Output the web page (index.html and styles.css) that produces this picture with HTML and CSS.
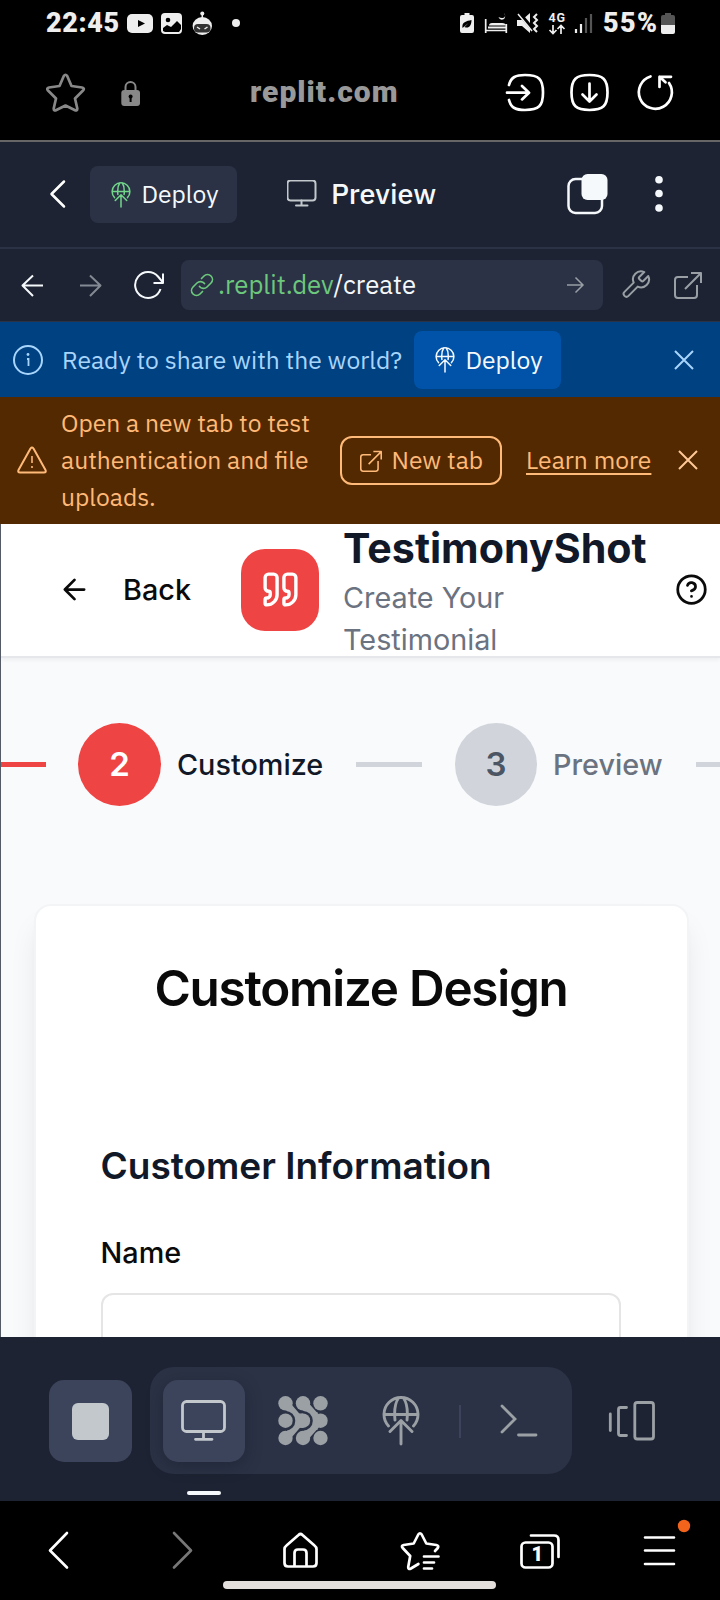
FILE: index.html
```html
<!DOCTYPE html>
<html lang="en">
<head>
<meta charset="utf-8">
<title>TestimonyShot – Preview</title>
<link rel="stylesheet" href="styles.css">
</head>
<body>
<svg class="defs" width="0" height="0">
  <symbol id="globe" viewBox="0 0 38 50">
    <g fill="none" stroke="currentColor" stroke-width="2.900" stroke-linecap="round" stroke-linejoin="round">
      <path d="M6.500 30A17 17 0 1 1 31.500 30M2.500 18.500h33M16.500 2C13 7 12 14 13 24M21.500 2c3.500 5 4.500 12 3.500 22M19 25v23M8 35.500l11-11 11 11"/>
    </g>
  </symbol>
  <symbol id="external" viewBox="0 0 28 28">
    <path fill="none" stroke="currentColor" stroke-width="2" stroke-linejoin="round" d="M14 6H4a3 3 0 0 0-3 3v15a3 3 0 0 0 3 3h16a3 3 0 0 0 3-3V14M17 2h10v10M27 2 11 18"/>
  </symbol>
</svg>

<main class="phone">
  <header class="status">
    <span class="clock">22:45</span>
    <svg class="notes" width="114" height="46" viewBox="127 0 114 46">
      <rect x="127" y="14" width="26" height="19" rx="5" fill="#eee"/><path d="M138 20v7l7-3.500z" fill="#000"/>
      <rect x="161" y="13" width="21" height="21" rx="4" fill="#eee"/><circle cx="168" cy="20" r="2.300" fill="#000"/><path d="M163 31v-3l4-3 4 2 6-6 4 4v4l-2 3h-14z" fill="#000"/>
      <circle cx="202.300" cy="13.500" r="2" fill="#eee"/><path d="M202.300 13v6" stroke="#eee" stroke-width="1.500"/><ellipse cx="202.300" cy="26" rx="9.700" ry="9" fill="#eee"/><rect x="194" y="24" width="16.500" height="8.500" rx="4" fill="#333"/><path d="m197 27 3 2M207.500 27l-3 2" stroke="#eee" stroke-width="1.500"/>
      <circle cx="236" cy="23" r="4" fill="#eee"/>
    </svg>
    <svg class="signals" width="134" height="46" viewBox="460 0 134 46">
      <path d="M464.500 15v-2h5v2H472a2 2 0 0 1 2 2v14a2 2 0 0 1-2 2h-10a2 2 0 0 1-2-2V17a2 2 0 0 1 2-2z" fill="#eee"/><path d="M462.500 28c-1-6 4-7 9-8 0 6-3 9-7 7l4-4" fill="#000"/>
      <path d="M485.700 19v14M485 30.500h22M506.300 33v-9" fill="none" stroke="#eee" stroke-width="1.700"/><path d="M488 28.500v-2h18v2zM489 25.500q0-2.500 3-2.500h10q4 0 4 2.500z" fill="#eee"/><path d="M504 13c3.500 4-1.500 6.500-5.500 4 2 5.500 9.500 2 5.500-4z" fill="#eee"/>
      <path d="M517 20h5l8-7v20l-8-7h-5z" fill="#eee"/><path d="m519 13 15 18" stroke="#000" stroke-width="4"/><path d="m518 14 14 17" stroke="#eee" stroke-width="1.500"/><path d="M537 14l-3 3 3 3-3 3 3 3-3 3 3 3" fill="none" stroke="#eee" stroke-width="2"/>
      <text x="548.500" y="22" class="net" textLength="17">4G</text><path d="M553 25v8m-3.500-3 3.500 3.500 3.500-3.500M561 34v-8.500m-3.500 3.500 3.500-3.500 3.500 3.500" fill="none" stroke="#eee" stroke-width="1.700"/>
      <path d="M576 29v4M581 24v9" stroke="#eee" stroke-width="2.200"/><path d="M586 18v15M591 14v19" stroke="#555" stroke-width="2.200"/>
    </svg>
    <span class="percent">55%</span>
    <svg width="15" height="46" viewBox="661 0 15 46"><path d="M665 15v-2h6v2h2q2 0 2 2v8h-14v-8q0-2 2-2z" fill="#555"/><path d="M661 25h14v7q0 2-2 2h-10q-2 0-2-2z" fill="#eee"/></svg>
  </header>

  <section class="browser">
    <svg class="b-star" width="40" height="40" viewBox="46 73 40 40"><path d="M63.800 76q1.700-2.500 3.400 0L71.500 86 82 87.500q3 .8 1 3L75 98.500l2.300 10q0 3-2.700 1.500L65.500 105.500l-9.100 4.500q-2.700 1.500-2.700-1.500l2.300-10-8-8q-2-2.200 1-3L59.500 86z" fill="none" stroke="#888" stroke-width="2.700" stroke-linejoin="round"/></svg>
    <svg class="b-lock" width="20" height="27" viewBox="121 79 20 27"><path d="M125.500 90v-4a5 5 0 0 1 10 0v4" fill="none" stroke="#888" stroke-width="2"/><rect x="121.300" y="89" width="18.700" height="16" rx="3" fill="#888"/><path d="M130.600 96v5" stroke="#000" stroke-width="2"/><circle cx="130.600" cy="95.500" r="2" fill="#000"/></svg>
    <span class="domain">replit.com</span>
    <svg class="b-acts" width="170" height="42" viewBox="505 72 170 42">
      <g fill="none" stroke="#fff" stroke-width="2.700" stroke-linecap="round" stroke-linejoin="round">
        <path d="M509 85c2-8 7-10 16-10 14 0 18 4 18 17.500S539 110 525 110c-9 0-14-2-16-10M507 92.700h21M522 86l7 6.700-7 6.700"/>
        <path d="M589.500 75c13.500 0 18 4 18 17.500s-4.500 17.500-18 17.500-18-4-18-17.500 4.500-17.500 18-17.500zM589.500 83.500V101M582.500 94.500l7 7 7-7"/>
        <path d="M650.500 76.500A16.500 16.500 0 1 0 669 83M659.500 87V76.800h11.500M659.500 76.800l6 5.500"/>
      </g>
    </svg>
  </section>

  <section class="topbar">
    <svg class="t-back" width="18" height="30" viewBox="49 179.500 18 30"><path d="M64 182 51.500 194.500 64 207" fill="none" stroke="#fff" stroke-width="2.500" stroke-linecap="round" stroke-linejoin="round"/></svg>
    <div class="deploy"><svg class="globe green" width="20" height="26"><use href="#globe"/></svg><span class="w-deploy">Deploy</span></div>
    <svg class="t-screen" width="30" height="28" viewBox="287 181.500 30 28"><g fill="none" stroke="#c2c8cc" stroke-width="2" stroke-linecap="round"><rect x="287.500" y="182" width="28" height="20" rx="3"/><path d="M301.500 202v5M296 207h11.500"/></g></svg>
    <span class="t-title">Preview</span>
    <svg class="t-tabs" width="42" height="42" viewBox="567 174 42 42"><rect x="568.500" y="179" width="33.500" height="34" rx="7" fill="none" stroke="#f5f9fc" stroke-width="2.500"/><rect x="581.500" y="174" width="26" height="26" rx="6" fill="#f5f9fc"/></svg>
    <svg class="t-more" width="8" height="36" viewBox="655.500 177 8 36" fill="#f5f9fc"><circle cx="659.500" cy="180.800" r="3.800"/><circle cx="659.500" cy="194.500" r="3.800"/><circle cx="659.500" cy="209" r="3.800"/></svg>
  </section>

  <section class="address">
    <svg class="a-nav" width="144" height="30" viewBox="21 270 144 30"><g fill="none" stroke-width="2" stroke-linejoin="round">
      <path d="M43 285.500H22.500M33 275.500l-10.500 10L33 296" stroke="#f5f9fc"/>
      <path d="M80 285.500h20.500M90 275.500l10.500 10L90 296" stroke="#848a93"/>
      <path d="M160.500 289A13 13 0 1 1 158 276.500l5 6M163 273.500V283h-9.500" stroke="#f5f9fc"/></g></svg>
    <div class="url">
      <svg width="24" height="24" viewBox="0 0 24 24"><g fill="none" stroke="#6cc87c" stroke-width="1.700" stroke-linecap="round"><path d="M9.500 13.500a5 5 0 0 0 7.500.5l4-4a4.800 4.800 0 0 0-7-7l-2.500 2.500"/><path d="M14.500 10.500a5 5 0 0 0-7.500-.5l-4 4a4.800 4.800 0 0 0 7 7l2.500-2.500"/></g></svg>
      <span class="w-url"><span class="host">.replit.dev</span>/create</span>
      <svg width="18" height="18" viewBox="0 0 18 18"><path d="M0 9h16M8.500 1.500 16 9l-7.500 7.500" fill="none" stroke="#999fa5" stroke-width="1.500"/></svg>
    </div>
    <svg class="a-wrench" width="30" height="30" viewBox="1 1 22.500 22.500"><path d="M14.700 6.300a1 1 0 0 0 0 1.400l1.600 1.600a1 1 0 0 0 1.400 0l3.770-3.770a6 6 0 0 1-7.940 7.940l-6.910 6.910a2.120 2.120 0 0 1-3-3l6.910-6.910a6 6 0 0 1 7.940-7.940z" fill="none" stroke="#999fa5" stroke-width="1.500" stroke-linejoin="round"/></svg>
    <svg class="a-ext" width="28" height="28"><use href="#external"/></svg>
  </section>

  <section class="banner blue">
    <svg class="i-info" width="30" height="30" viewBox="0 0 30 30"><circle cx="15" cy="15" r="14" fill="none" stroke="#a8d5fc" stroke-width="2"/><path d="M14 14h1.500v7" fill="none" stroke="#a8d5fc" stroke-width="1.800"/><circle cx="15" cy="9.500" r="1.400" fill="#a8d5fc"/></svg>
    <span class="w-ready">Ready to share with the world?</span>
    <div class="deploy bright"><svg class="globe" width="20" height="26"><use href="#globe"/></svg><span class="w-deploy">Deploy</span></div>
    <svg class="x-blue" width="20" height="20" viewBox="0 0 20 20"><path d="m1 1 18 18M19 1 1 19" stroke="#a8d5fc" stroke-width="2"/></svg>
  </section>

  <section class="banner brown">
    <svg class="i-warn" width="30" height="28" viewBox="0 0 30 28"><path d="M13.500 2.500q1.500-2 3 0L28.500 24q1 2.500-1.500 2.500H3Q.5 26.500 1.500 24z" fill="none" stroke="#ffb978" stroke-width="2" stroke-linejoin="round"/><path d="M15 10v7" stroke="#ffb978" stroke-width="1.600"/><circle cx="15" cy="21" r="1.100" fill="#ffb978"/></svg>
    <p class="warn">Open a new tab to test<br>authentication and file<br>uploads.</p>
    <div class="newtab"><svg width="22" height="22"><use href="#external"/></svg><span class="w-newtab">New tab</span></div>
    <span class="learn">Learn more</span>
    <svg class="x-brown" width="20" height="20" viewBox="0 0 20 20"><path d="m1 1 18 18M19 1 1 19" stroke="#ffc896" stroke-width="2"/></svg>
  </section>

  <section class="app">
    <header class="app-head">
      <svg class="h-arrow" width="33" height="33" viewBox="0 0 24 24"><path d="m12 19-7-7 7-7M19 12H5" fill="none" stroke="#0a0a0a" stroke-width="2" stroke-linecap="round" stroke-linejoin="round"/></svg>
      <span class="h-back">Back</span>
      <div class="logo"><svg width="41" height="41" viewBox="0 0 24 24"><g fill="none" stroke="#fff" stroke-width="2" stroke-linecap="round" stroke-linejoin="round"><path d="M16 3a2 2 0 0 0-2 2v6a2 2 0 0 0 2 2 1 1 0 0 1 1 1v1a2 2 0 0 1-2 2 1 1 0 0 0-1 1v2a1 1 0 0 0 1 1 6 6 0 0 0 6-6V5a2 2 0 0 0-2-2z"/><path d="M5 3a2 2 0 0 0-2 2v6a2 2 0 0 0 2 2 1 1 0 0 1 1 1v1a2 2 0 0 1-2 2 1 1 0 0 0-1 1v2a1 1 0 0 0 1 1 6 6 0 0 0 6-6V5a2 2 0 0 0-2-2z"/></g></svg></div>
      <div class="brand"><h1>TestimonyShot</h1><p>Create Your<br>Testimonial</p></div>
      <svg class="h-help" width="33" height="33" viewBox="0 0 24 24"><g fill="none" stroke="#0a0a0a" stroke-width="2" stroke-linecap="round"><circle cx="12" cy="12" r="10"/><path d="M9.090 9a3 3 0 0 1 5.830 1c0 2-3 3-3 3M12 17h.01"/></g></svg>
    </header>
    <nav class="steps">
      <span class="line first"></span>
      <span class="num on">2</span><span class="label on">Customize</span>
      <span class="line mid"></span>
      <span class="num">3</span><span class="label">Preview</span>
      <span class="line last"></span>
    </nav>
    <div class="card">
      <h2>Customize Design</h2>
      <h3>Customer Information</h3>
      <label>Name</label>
      <div class="input"></div>
    </div>
  </section>

  <section class="dock">
    <div class="tile stop"><i></i></div>
    <div class="pill">
      <div class="tile active"><svg width="46" height="42" viewBox="181 1400 46 42"><g fill="none" stroke="#c2c8cc" stroke-width="2.800" stroke-linecap="round"><rect x="182.500" y="1401.500" width="42" height="30" rx="4"/><path d="M203.500 1432v7M195.500 1439.300h16.500"/></g></svg></div>
      <svg class="agent" width="50" height="50" viewBox="277.500 1396 50 50">
        <path d="M302.500 1403.500l15.500 17.500-15.500 17.500" fill="none" stroke="#9ba0a5" stroke-width="9"/><path d="M304 1413l13-1v18l-13-1z" fill="#9ba0a5"/>
        <circle cx="302.500" cy="1420.700" r="9.800" fill="#2b3245"/>
        <path d="M285 1403.500l15 17.500-15 17.500" fill="none" stroke="#9ba0a5" stroke-width="8"/><path d="M290 1413.500h12.500v14.400h-12.500z" fill="#9ba0a5"/>
        <circle cx="285" cy="1420.700" r="9.800" fill="#2b3245"/>
        <g fill="#9ba0a5"><circle cx="285" cy="1403.300" r="7.200"/><circle cx="302.500" cy="1403.300" r="7.200"/><circle cx="320" cy="1403.300" r="7.200"/><circle cx="285" cy="1420.700" r="7.200"/><circle cx="302.500" cy="1420.700" r="7.200"/><circle cx="320" cy="1420.700" r="7.200"/><circle cx="285" cy="1438" r="7.200"/><circle cx="302.500" cy="1438" r="7.200"/><circle cx="320" cy="1438" r="7.200"/></g>
      </svg>
      <svg class="d-globe" width="38" height="50"><use href="#globe"/></svg>
      <span class="sep"></span>
      <svg class="term" width="38" height="34" viewBox="500 1404 38 34"><path d="m502 1406 13 13-13 13M518.500 1435h17.500" fill="none" stroke="#9ba0a5" stroke-width="2.800" stroke-linecap="round"/></svg>
    </div>
    <svg class="devices" width="48" height="42" viewBox="608 1400 48 42"><g fill="none" stroke="#9ba0a5" stroke-width="2.800" stroke-linecap="round"><path d="M610.300 1414v16.500M626.500 1407.500h-6q-2 0-2 2v24q0 2 2 2h6"/><rect x="634.800" y="1402.500" width="18.700" height="36.500" rx="2.500"/></g></svg>
    <span class="marker"></span>
  </section>

  <footer class="nav">
    <svg class="n-back" width="22" height="42" viewBox="48 1529 22 42"><path d="m67 1533-17 17.500 17 17" fill="none" stroke="#fff" stroke-width="2.600" stroke-linecap="round" stroke-linejoin="round"/></svg>
    <svg class="n-fwd" width="22" height="42" viewBox="171 1529 22 42"><path d="m174 1533 17 17.500-17 17" fill="none" stroke="#777" stroke-width="2.600" stroke-linecap="round" stroke-linejoin="round"/></svg>
    <svg class="n-home" width="38" height="42" viewBox="282 1529 38 42"><path d="M284.500 1549q0-2 2-3.500l12-10.500q2-2 4 0l12 10.500q2 1.500 2 3.500v14q0 3.500-3.500 3.500h-25q-3.500 0-3.500-3.500zM294.500 1566v-13q0-3.500 3.500-3.500h5q3.500 0 3.500 3.500v13" fill="none" stroke="#fff" stroke-width="2.700"/></svg>
    <svg class="n-star" width="42" height="42" viewBox="400 1529 42 42"><path d="M435 1550l2.800-3q1.500-2.300-1.500-3l-10-1.500-4.600-9q-1.700-2.500-3.400 0l-4.600 9-10 1.500q-3 .8-1 3l7.500 8-2 11q0 3 2.700 1.500l7.500-4.500M424 1555.500h14.500M424 1561.500h10M424 1567.500h8" fill="none" stroke="#fff" stroke-width="2.700" stroke-linecap="round" stroke-linejoin="round"/></svg>
    <svg class="n-tabs" width="42" height="42" viewBox="520 1529 42 42"><g fill="none" stroke="#fff" stroke-width="2.700" stroke-linecap="round"><rect x="521.500" y="1542.500" width="31" height="25" rx="4"/><path d="M531 1535.500h23q4.500 0 4.500 4.500v17"/></g><text x="531.500" y="1561" class="count">1</text></svg>
    <svg class="n-menu" width="50" height="52" viewBox="642 1519 50 52"><path d="M645 1537.500h29M645 1550.500h29M645 1564h29" stroke="#fff" stroke-width="2.600" stroke-linecap="round"/><circle cx="684" cy="1526" r="6.200" fill="#f2641c"/></svg>
    <span class="gesture"></span>
  </footer>
</main>
</body>
</html>
```
FILE: styles.css
```css
* { box-sizing: border-box; margin: 0; padding: 0; }
body { width: 720px; height: 1600px; background: #000; overflow: hidden; font-family: "Inter", sans-serif; }
svg { display: block; flex: none; }
.defs { position: absolute; }
span, h1, h2, h3, label, p { white-space: nowrap; flex: none; }
.phone { width: 720px; height: 1600px; display: flex; flex-direction: column; }
.phone > * { flex: none; display: flex; align-items: center; }

.status { height: 46px; color: #eee; font: 900 27px/46px "Roboto", sans-serif; letter-spacing: .6px; }
.clock { width: 73px; margin-left: 46px; }
.notes { margin-left: 8px; }
.signals { margin-left: 219px; }
.percent { width: 58px; margin-left: 9px; letter-spacing: 1.300px; }
.net { font: 700 12.500px "Roboto", sans-serif; fill: #eee; }

.browser { height: 96px; border-bottom: 2px solid #666; }
.b-star { margin-left: 46px; margin-top: -1px; }
.b-lock { margin-left: 35px; }
.domain { width: 150px; margin-left: 109px; margin-top: -2px; color: #999; font: 900 30px/40px "Roboto", sans-serif; letter-spacing: 1px; }
.b-acts { margin-left: 105px; }

.topbar, .address, .banner { font: 400 24.650px/37px "IBM Plex Sans", "Roboto", sans-serif; }
.topbar { height: 107px; background: #1d2332; border-bottom: 2px solid #2b3245; color: #f5f9fc; }
.t-back { margin-left: 49px; margin-top: -1px; }
.deploy { display: flex; align-items: center; width: 147px; height: 57px; margin-left: 23px; padding-left: 21px; border-radius: 8px; background: #2b3245; color: #f5f9fc; }
.deploy span { margin-left: 10.500px; }
.green { color: #72d68a; }
.t-screen { margin-left: 50px; margin-top: -1px; }
.t-title { width: 106px; margin-left: 14px; margin-top: -2px; font-size: 28.700px; font-weight: 500; }
.t-tabs { margin-left: 130px; }
.t-more { margin-left: 46px; margin-top: -1px; }

.address { height: 73px; background: #1d2332; color: #f5f9fc; border-bottom: 1px solid #2b3245; }
.a-nav { margin-left: 21px; }
.url { display: flex; align-items: center; width: 422px; height: 50px; margin-left: 16px; padding-left: 9px; border-radius: 8px; background: #2b3245; font-size: 25.700px; }
.w-url { width: 335px; margin-left: 4px; margin-right: 14px; margin-top: -2px; }
.host { color: #6cc87c; }
.a-wrench { margin-left: 18px; }
.a-ext { margin-left: 23px; color: #999fa5; }

.blue { height: 75px; padding-top: 1px; background: #004182; color: #a8d5fc; }
.i-info { margin-left: 13px; }
.w-ready { width: 352px; margin-left: 19px; }
.blue .deploy { margin-left: 0; background: #0053a8; height: 58px; }
.x-blue { margin-left: 113px; }

.brown { height: 127px; background: #522900; color: #ffb978; }
.i-warn { margin-left: 17px; margin-top: -1px; }
.warn { width: 265px; margin-left: 14px; }
.newtab { display: flex; align-items: center; width: 162px; height: 49px; margin-left: 14px; padding-left: 18px; border: 2px solid #ffb978; border-radius: 12px; }
.w-newtab { margin-left: 9.500px; }
.learn { width: 125px; margin-left: 24px; text-decoration: underline; text-underline-offset: 4px; text-decoration-thickness: 2px; }
.x-brown { margin-left: 27px; margin-top: -1px; }

.phone > .app { height: 813px; display: block; overflow: hidden; background: #f9fafc; border-left: 1px solid #555b66; }
.app-head { position: relative; display: flex; align-items: center; height: 134px; background: #fff; border-bottom: 2px solid #e5e7eb; box-shadow: 0 2px 4px rgba(0, 0, 0, .05); font-size: 28.800px; color: #0a0a0a; }
.h-arrow { margin-left: 57px; margin-top: -2px; }
.h-back { width: 68px; margin-left: 32px; margin-top: -2px; font-weight: 500; }
.logo { display: flex; align-items: center; justify-content: center; width: 78px; height: 82px; margin-left: 50px; border-radius: 24px; background: #ef4444; }
.logo svg { margin-top: -2px; }
.brand { width: 303px; margin-left: 24px; padding-top: 3px; }
.brand h1 { font-size: 41.200px; line-height: 52px; font-weight: 700; color: #111827; }
.brand p { line-height: 42px; color: #6b7280; padding-top: 3px; margin-bottom: -3px; }
.brand h1 { margin-top: -3px; }
.h-help { margin-left: 29px; margin-top: -2px; }

.steps { display: flex; align-items: center; height: 213px; font-size: 28.800px; }
.line { height: 5px; background: #d1d5db; }
.line.first { width: 45px; background: #ef4444; }
.line.mid { width: 66px; margin-left: 33px; }
.line.last { width: 30px; margin-left: 33px; }
.num { width: 83px; height: 83px; margin-left: 32px; border-radius: 50%; background: #d1d5db; color: #4b5563; font-size: 33px; font-weight: 600; line-height: 83px; text-align: center; }
.num.on { background: #ef4444; color: #fff; }
.line.mid + .num { width: 82px; margin-left: 33px; }
.label { width: 110px; margin-left: 16px; color: #6b7280; font-weight: 500; }
.label.on { width: 146px; color: #111827; }

.card { width: 655px; height: 600px; margin: 33px 0 0 32.500px; padding: 0 66px; background: #fff; border: 2px solid #f3f4f6; border-radius: 17px; box-shadow: 0 20px 31px -6px rgba(0, 0, 0, .1), 0 8px 12px -8px rgba(0, 0, 0, .1); }
.card h2 { padding-top: 51px; font-size: 49.400px; line-height: 62px; font-weight: 600; letter-spacing: -.025em; text-align: center; color: #0a0a0a; }
.card h3 { margin-top: 123px; font-size: 37px; line-height: 48px; font-weight: 600; color: #111827; margin-left: -1px; }
.card label { display: block; margin-top: 45px; font-size: 28.800px; line-height: 36px; font-weight: 500; color: #0a0a0a; margin-left: -1px; }
.input { width: 520px; height: 82px; margin-top: 22px; margin-left: -1px; border: 2px solid #e5e5e5; border-radius: 12px; }

.dock { position: relative; height: 164px; padding-top: 4px; background: #1d2332; }
.tile { display: flex; align-items: center; justify-content: center; flex: none; width: 83px; height: 82px; border-radius: 15px; background: #3c445c; }
.stop { margin-left: 49px; }
.stop i { width: 37px; height: 37px; border-radius: 6px; background: #c2c8cc; }
.pill { display: flex; align-items: center; flex: none; width: 422px; height: 107px; margin-left: 18px; margin-top: -1px; padding-top: 1px; border-radius: 24px; background: #2b3245; color: #9ba0a5; }
.active { width: 82px; margin-left: 13px; box-shadow: 0 4px 16px rgba(20, 25, 40, .4); }
.agent { margin-left: 32.500px; }
.d-globe { margin-left: 54px; }
.sep { width: 2px; height: 33px; margin-left: 39px; background: #3c445c; }
.term { margin-left: 39px; }
.devices { margin-left: 36px; }
.marker { position: absolute; left: 187px; top: 154px; width: 34px; height: 4px; border-radius: 2px; background: #f5f9fc; }

.nav { position: relative; height: 99px; background: #000; }
.n-back { margin-left: 48px; margin-top: -1px; }
.n-fwd { margin-left: 101px; margin-top: -1px; }
.n-home { margin-left: 89px; margin-top: -1px; }
.n-star { margin-left: 80px; }
.n-tabs { margin-left: 78px; margin-top: -1px; }
.n-menu { margin-left: 80px; margin-top: -11px; }
.count { font: 900 20px "Roboto", sans-serif; fill: #fff; }
.gesture { position: absolute; left: 223px; top: 80px; width: 273px; height: 8px; border-radius: 4px; background: #e3dfdc; }
```
